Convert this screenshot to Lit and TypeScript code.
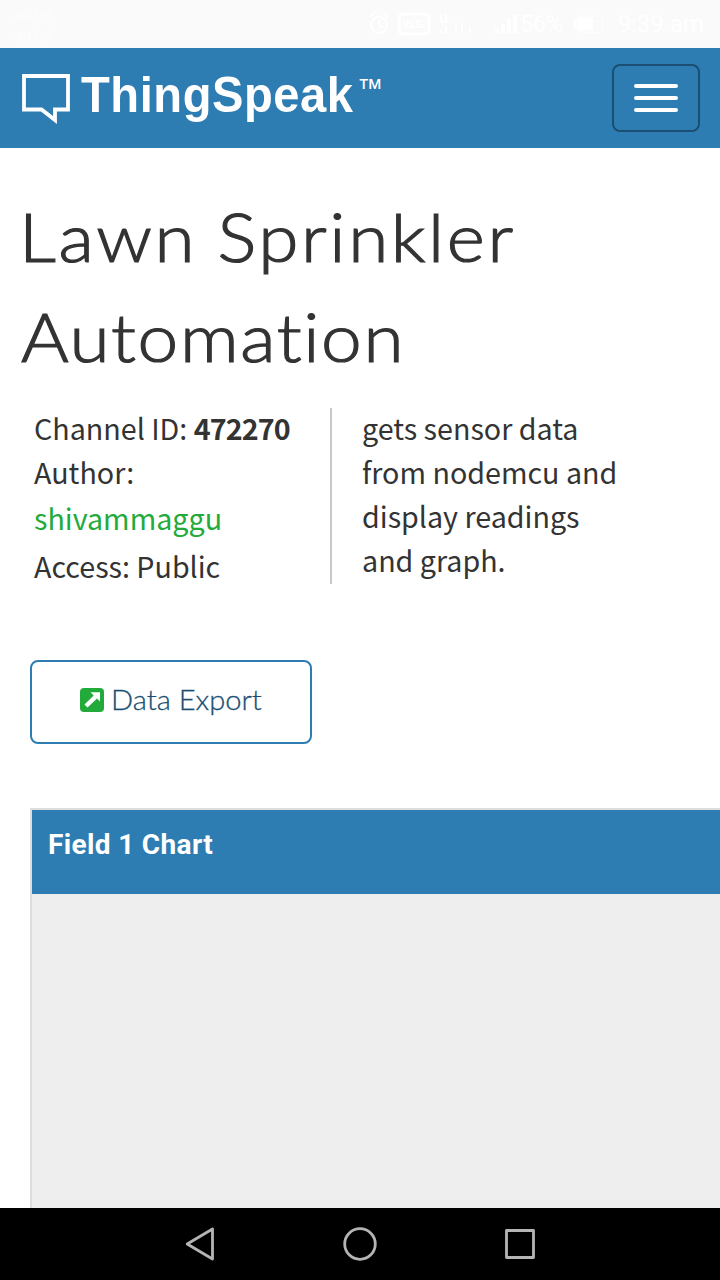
import { LitElement, html, css, svg } from "lit";
import { customElement } from "lit/decorators.js";

@customElement("status-bar")
class StatusBar extends LitElement {
  static styles = css`
    :host { display: flex; justify-content: space-between; height: 48px; background: #fafafa; color: #fff;
      font: 24px/48px Roboto, sans-serif; box-sizing: border-box; padding: 0 16px 0 14px; }
    .carrier { font-size: 17px; line-height: 21px; padding-top: 4px; opacity: 0.6; }
    .right { display: flex; align-items: center; }
    .volte { font: bold 11px "Liberation Sans", sans-serif; }
    .pct { margin-left: 2px; letter-spacing: -0.6px; }
    .batt { margin-left: 10px; }
    .time { margin-left: 15px; }
  `;
  render() {
    return html`
      <div class="carrier">airtel<br />airtel</div>
      <div class="right">
        <svg width="150" height="30" viewBox="0 0 150 30" fill="none" stroke="#fff" stroke-width="2">
          <circle cx="11" cy="16" r="8" /><path d="M11 11v5l4 3M2 8l5-5M20 8l-5-5" />
          <rect x="31" y="5" width="30" height="20" rx="4" stroke-width="3" />
          <text class="volte" x="46" y="19" text-anchor="middle" textLength="24" fill="#fff" stroke="none">VoLTE</text>
          <path d="M73 24v-3M78 24v-6M88 24v-8M94 24v-10M102 24v-6M73 6v7h8M78 4v9" />
          <path stroke-width="4" d="M129 24v-4M135 24v-9M141 24v-14M147 24v-18" />
        </svg>
        <span class="pct">56%</span>
        <svg class="batt" width="30" height="18" viewBox="0 0 30 18">
          <rect x="4" y="1" width="25" height="16" rx="2" fill="none" stroke="#fff" stroke-width="1" />
          <rect x="0" y="5" width="3" height="8" fill="#fff" /><rect x="5" y="3" width="15" height="12" fill="#fff" />
        </svg>
        <span class="time">9:39 am</span>
      </div>`;
  }
}

@customElement("site-header")
class SiteHeader extends LitElement {
  static styles = css`
    :host { display: flex; justify-content: space-between; height: 100px; box-sizing: border-box;
      padding: 16px 20px 0 22px; background: #2e7db2; color: #fff; }
    .brand { display: flex; align-items: flex-start; }
    .bubble { margin-top: 10px; display: block; }
    .name { width: 277px; margin: 3px 0 0 11px; font: bold 50px/56px "Liberation Sans", sans-serif; letter-spacing: 0.6px;
      white-space: nowrap; transform: scaleX(0.942); transform-origin: left; }
    .tm { margin: 12px 0 0 -1px; font: 26px/24px "Liberation Sans", sans-serif; }
    .menu { width: 88px; height: 68px; box-sizing: border-box; border: 2px solid #1b4f72; border-radius: 8px;
      background: transparent; padding: 0 0 0 20px; display: flex; flex-direction: column; justify-content: center; gap: 8px; }
    .line { width: 44px; height: 4px; border-radius: 2px; background: #fff; }
  `;
  render() {
    return html`
      <div class="brand">
        <svg class="bubble" width="48" height="51" viewBox="0 0 48 51">
          <path d="M2 2H46V35.5H33V46L19.500 35.5H2Z" fill="none" stroke="#fff" stroke-width="3.8" />
        </svg>
        <span class="name">ThingSpeak</span><span class="tm">™</span>
      </div>
      <button class="menu" aria-label="Menu">
        <span class="line"></span><span class="line"></span><span class="line"></span>
      </button>`;
  }
}

@customElement("nav-bar")
class NavBar extends LitElement {
  static styles = css`
    :host { display: flex; justify-content: center; align-items: center; gap: 124px; height: 72px; background: #000; }
    svg { display: block; }
  `;
  icon(shape: unknown) {
    return html`<svg width="36" height="36" viewBox="0 0 36 36" fill="none" stroke="#b4b4b4" stroke-width="2.8" stroke-linejoin="round">${shape}</svg>`;
  }
  render() {
    return html`
      ${this.icon(svg`<path d="M30.500 3V33L5.200 18Z" />`)}
      ${this.icon(svg`<circle cx="18" cy="18" r="15.300" />`)}
      ${this.icon(svg`<rect x="4.500" y="4.500" width="27" height="27" />`)}`;
  }
}

@customElement("app-root")
class AppRoot extends LitElement {
  static styles = css`
    :host { display: flex; flex-direction: column; height: 1280px; width: 720px; overflow: hidden; background: #fff; color: #333; }
    main { flex: 1; min-height: 0; overflow: hidden; display: flex; flex-direction: column; align-items: flex-start; }
    h1 { margin: 38px 0 0 20px; font: 300 67.5px/100px Lato, sans-serif; white-space: nowrap; -webkit-text-stroke: 1.2px #333; }
    .l1, .l2 { display: block; transform: scaleX(1.08); transform-origin: left; }
    .l1 { letter-spacing: 2.4px; word-spacing: -2px; margin-left: -1px; }
    .l2 { letter-spacing: 1.5px; margin-left: 1px; }
    .info { display: flex; margin: 22px 0 0 34px; font: 28.66px/44px "Noto Sans CJK SC", sans-serif; white-space: nowrap; height: 176px; }
    .meta { display: flow-root; width: 296px; height: 176px; border-right: 2px solid #c8c8c8; }
    .row { height: 44px; }
    .row:first-child { margin-top: -2px; }
    .author { height: 48px; line-height: 48px; color: #22ab3a; }
    .access { height: 44px; line-height: 48px; }
    .id { font-weight: 700; letter-spacing: -0.9px; }
    .desc { margin: -2px 0 0 30px; }
    .export { margin: 76px 0 0 30px; width: 282px; height: 84px; box-sizing: border-box; border: 2px solid #2e7db2;
      border-radius: 8px; background: #fff; padding: 0 0 4px 48px; display: flex; align-items: center; gap: 7px;
      color: #1b4f72; font: 300 28px/40px Lato, sans-serif; white-space: nowrap; }
    .label { margin-bottom: 2px; transform: scaleX(1.04); transform-origin: left; -webkit-text-stroke: 0.3px #1b4f72; }
    .chart { margin: 64px 0 0 30px; width: 690px; flex: 1; box-sizing: border-box; border: solid #ddd; border-width: 2px 0 0 2px; background: #eee; }
    .head { height: 84px; box-sizing: border-box; padding: 15px 16px; background: #2e7db2; color: #fff;
      font: bold 28px/40px Roboto, sans-serif; letter-spacing: 0.35px; }
  `;
  render() {
    return html`
      <status-bar></status-bar>
      <site-header></site-header>
      <main>
        <h1><span class="l1">Lawn Sprinkler</span><span class="l2">Automation</span></h1>
        <section class="info">
          <div class="meta">
            <div class="row">Channel ID: <span class="id">472270</span></div>
            <div class="row">Author:</div>
            <div class="author">shivammaggu</div>
            <div class="access">Access: Public</div>
          </div>
          <div class="desc">gets sensor data<br />from nodemcu and<br />display readings<br />and graph.</div>
        </section>
        <button class="export">
          <svg width="24" height="24" viewBox="0 0 24 24">
            <rect width="24" height="24" rx="4" fill="#22ab3a" />
            <path d="M10.500 4.300H20V13.500L17 10.500L7.500 19.500L4.500 16.500L13.700 7.500Z" fill="#fff" />
          </svg>
          <span class="label">Data Export</span>
        </button>
        <section class="chart"><div class="head">Field 1 Chart</div></section>
      </main>
      <nav-bar></nav-bar>`;
  }
}
